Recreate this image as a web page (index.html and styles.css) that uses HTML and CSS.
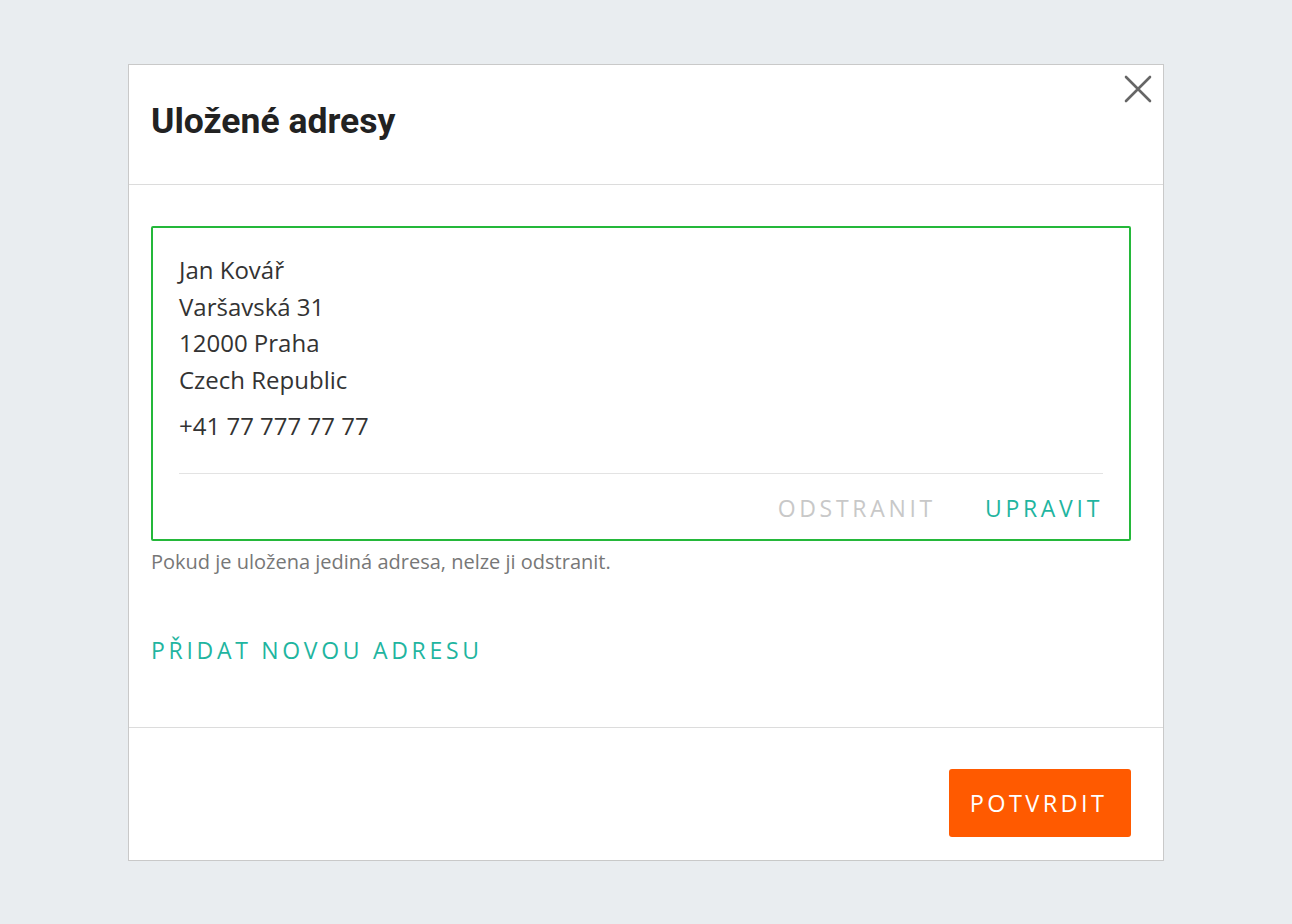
FILE: index.html
```html
<!DOCTYPE html>
<html lang="cs">
<head>
<meta charset="utf-8">
<title>Uložené adresy</title>
<link rel="stylesheet" href="styles.css">
</head>
<body>
<div class="dialog">
  <div class="dialog-header">
    <h1 class="title">Uložené adresy</h1>
    <button class="close" aria-label="Zavřít">
      <svg width="28" height="28" viewBox="0 0 28 28"><path d="M2 2 L26 26 M26 2 L2 26" stroke="#666" stroke-width="2.6" stroke-linecap="round" fill="none"/></svg>
    </button>
  </div>
  <div class="dialog-body">
    <div class="card">
      <div class="address">
        <div>Jan Kovář</div>
        <div>Varšavská 31</div>
        <div>12000 Praha</div>
        <div>Czech Republic</div>
      </div>
      <div class="phone">+41 77 777 77 77</div>
      <div class="card-actions">
        <span class="link disabled">ODSTRANIT</span>
        <span class="link">UPRAVIT</span>
      </div>
    </div>
    <p class="note">Pokud je uložena jediná adresa, nelze ji odstranit.</p>
    <div class="add"><span class="link">PŘIDAT NOVOU ADRESU</span></div>
  </div>
  <div class="dialog-footer">
    <button class="confirm">POTVRDIT</button>
  </div>
</div>
</body>
</html>
```

FILE: styles.css
```css
* { box-sizing: border-box; }
html, body { margin: 0; padding: 0; }
body {
  background: #e9edf0;
  font-family: "Open Sans", "Liberation Sans", sans-serif;
  color: #333;
  padding-top: 64px;
}
.dialog {
  width: 1036px;
  margin: 0 auto;
  background: #fff;
  border: 1px solid #c9c9c9;
}
.dialog-header {
  position: relative;
  height: 120px;
  border-bottom: 1px solid #dcdcdc;
  display: flex;
  align-items: center;
  padding: 0 0 8px 22px;
}
.title {
  margin: 0;
  font-family: Roboto, "Liberation Sans", sans-serif;
  font-weight: 700;
  font-size: 35.5px;
  color: #222;
}
.close {
  position: absolute;
  top: 10px;
  right: 11px;
  background: none;
  border: 0;
  padding: 0;
  width: 28px;
  height: 28px;
  cursor: pointer;
}
.close svg { display: block; }
.dialog-body {
  padding: 41px 32px 61px 22px;
  border-bottom: 1px solid #dcdcdc;
}
.card {
  border: 2px solid #24b83a;
  border-radius: 2px;
  padding: 24px 26px 15px;
}
.address, .phone {
  font-size: 24px;
  line-height: 36.5px;
  color: #333;
}
.phone { margin-top: 10px; padding-bottom: 28.5px; border-bottom: 1px solid #e3e3e3; }
.card-actions {
  display: flex;
  justify-content: flex-end;
  gap: 49px;
  padding-top: 18px;
}
.link {
  font-size: 23px;
  letter-spacing: 3.7px;
  color: #1fb5a0;
  cursor: pointer;
}
.link.disabled { color: #c8c8c8; cursor: default; }
.note {
  margin: 6.5px 0 0;
  font-size: 20px;
  color: #777;
}
.add { margin-top: 59px; }
.dialog-footer {
  display: flex;
  justify-content: flex-end;
  padding: 41px 32px 23px;
}
.confirm {
  width: 182px;
  height: 68px;
  background: #ff5a00;
  border: 0;
  border-radius: 3px;
  color: #fff;
  font-family: "Open Sans", "Liberation Sans", sans-serif;
  font-size: 23.5px;
  letter-spacing: 3.4px;
  cursor: pointer;
  padding: 0 3px 0 0;
}
```
